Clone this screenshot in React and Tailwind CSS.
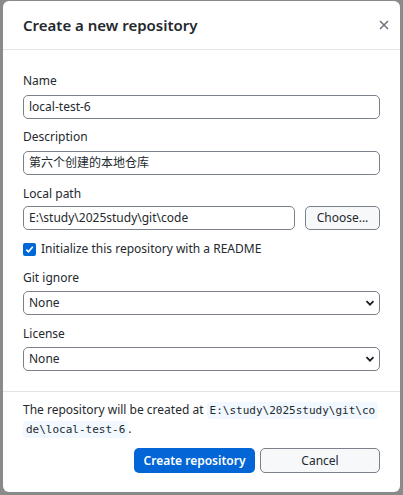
import React from 'react';

const font = { fontFamily: '"Segoe UI", "Noto Sans", "Noto Sans CJK SC", sans-serif' };

const Label = ({ children, className = '' }) => (
  <div className={`text-[12px] leading-[16px] text-[#24292e] ${className}`}>{children}</div>
);

const TextBox = ({ value, className = '' }) => (
  <div className={`h-[24px] flex items-center px-[5px] border border-[#7b818a] rounded-[5px] bg-white text-[12px] text-[#24292e] ${className}`}>
    {value}
  </div>
);

const Select = ({ value }) => (
  <div className="h-[24px] flex items-center justify-between pl-[5px] pr-[4px] border border-[#7b818a] rounded-[5px] bg-white text-[12px] text-[#24292e]">
    <span>{value}</span>
    <svg width="10" height="10" viewBox="0 0 10 10">
      <path d="M1.5 3.2 L5 6.7 L8.5 3.2" fill="none" stroke="#1b1f23" strokeWidth="1.8" />
    </svg>
  </div>
);

export default function App() {
  return (
    <div className="w-[403px] h-[495px] bg-[#8a8a8a] pl-[3px] pr-[3px] pt-[1px] pb-[3px]" style={font}>
      <div className="h-full bg-white rounded-[6px] flex flex-col">
        {/* Header */}
        <div className="h-[49px] flex items-center justify-between pl-[20px] pr-[10px] border-b border-[#e1e4e8]">
          <h1 className="text-[15px] font-semibold text-[#24292e]">Create a new repository</h1>
          <svg width="12" height="12" viewBox="0 0 12 12">
            <path d="M2 2 L10 10 M10 2 L2 10" stroke="#6a737d" strokeWidth="1.5" />
          </svg>
        </div>

        {/* Body */}
        <div className="px-[20px] pt-[23px] pb-[20px] border-b border-[#e1e4e8]">
          <Label>Name</Label>
          <TextBox value="local-test-6" className="mt-[6px]" />

          <Label className="mt-[10px]">Description</Label>
          <TextBox value="第六个创建的本地仓库" className="mt-[6px]" />

          <Label className="mt-[11px]">Local path</Label>
          <div className="mt-[4px] flex gap-[10px]">
            <TextBox value="E:\study\2025study\git\code" className="flex-1" />
            <button className="h-[24px] w-[75px] border border-[#7b818a] rounded-[5px] bg-[#f6f8fa] text-[12px] text-[#24292e]">
              Choose...
            </button>
          </div>

          <div className="mt-[11px] flex items-center gap-[5px] h-[16px]">
            <div className="w-[13px] h-[13px] rounded-[2px] bg-[#0068d6] flex items-center justify-center">
              <svg width="9" height="9" viewBox="0 0 9 9">
                <path d="M1.3 4.6 L3.5 6.8 L7.8 1.8" fill="none" stroke="white" strokeWidth="1.7" />
              </svg>
            </div>
            <span className="text-[12px] text-[#24292e]">Initialize this repository with a README</span>
          </div>

          <Label className="mt-[13px]">Git ignore</Label>
          <div className="mt-[5px]"><Select value="None" /></div>

          <Label className="mt-[11px]">License</Label>
          <div className="mt-[5px]"><Select value="None" /></div>
        </div>

        {/* Footer */}
        <div className="px-[20px] pt-[9px]">
          <p className="text-[12px] leading-[18px] text-[#24292e] break-all">
            The repository will be created at{' '}
            <code
              className="bg-[#f1f8ff] rounded-[4px] px-[3px] py-[2px] text-[11px] box-decoration-clone"
              style={{ fontFamily: '"DejaVu Sans Mono", monospace' }}
            >
              E:\study\2025study\git\code\local-test-6
            </code>
            .
          </p>
          <div className="mt-[9px] flex justify-end gap-[5px]">
            <button className="h-[25px] w-[121px] rounded-[5px] bg-[#0366d6] text-white text-[12px] font-semibold">
              Create repository
            </button>
            <button className="h-[25px] w-[120px] rounded-[5px] border border-[#7b818a] bg-[#f6f8fa] text-[12px] text-[#24292e]">
              Cancel
            </button>
          </div>
        </div>
      </div>
    </div>
  );
}
